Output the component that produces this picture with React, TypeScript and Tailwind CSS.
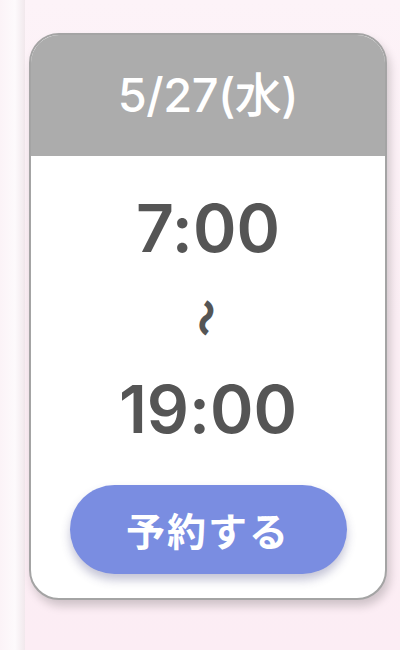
export default function App() {
  return (
    <div
      className="w-[400px] h-[650px] overflow-hidden flex bg-[linear-gradient(180deg,#fdf3f8_0%,#fbeef4_50%,#fcedf4_100%)] [font-feature-settings:'calt'_0]"
      style={{ fontFamily: 'Inter, "Noto Sans CJK JP", sans-serif' }}
    >
      <div className="w-[25px] shrink-0 h-full bg-[linear-gradient(90deg,#fbf3f7_0%,#fdfafc_60%,#f1e8ec_100%)]" />
      <div className="ml-[4px] mt-[33px] w-[358px] h-[567px] rounded-[30px] border-2 border-[#a4a4a4] bg-white overflow-hidden shadow-[3px_6px_10px_rgba(0,0,0,0.18)] flex flex-col">
        <div className="h-[121px] bg-[#acacac] flex items-center justify-center">
          <span className="text-white text-[47px] font-medium tracking-[-0.5px] leading-none mb-[2px]">
            5/27(水)
          </span>
        </div>
        <div className="flex-1 flex flex-col items-center">
          <div className="mt-[39px] text-[66px] font-semibold text-[#555555] leading-none">7:00</div>
          <div
            className="mt-[40px] h-[34px] w-[34px] flex items-center justify-center text-[38px] font-black text-[#555555] leading-none rotate-[96deg]"
            style={{ fontFamily: '"Noto Sans CJK JP", sans-serif' }}
          >
            〜
          </div>
          <div className="mt-[41px] text-[66px] font-semibold text-[#555555] leading-none">19:00</div>
          <button
            className="mt-[43px] w-[277px] h-[89px] rounded-full bg-[#7a8de1] text-white text-[39px] font-bold shadow-[0_6px_10px_rgba(60,60,120,0.3)] flex items-center justify-center tracking-[2px]"
            style={{ fontFamily: '"Noto Sans CJK JP", sans-serif' }}
          >
            予約する
          </button>
        </div>
      </div>
    </div>
  );
}
